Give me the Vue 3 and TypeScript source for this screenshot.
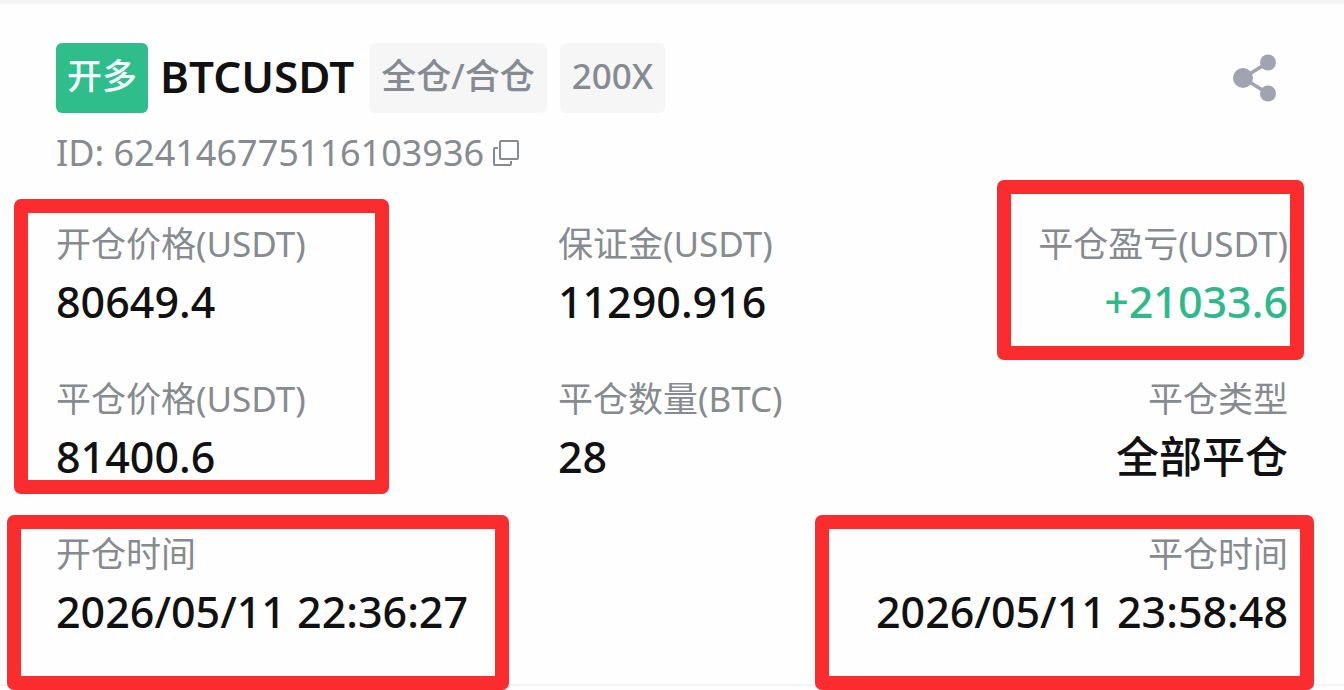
<script setup lang="ts">
interface Field {
  label: string
  value: string
  place: string
  gain?: boolean
}

const orderId = '624146775116103936'

const fields: Field[] = [
  { label: '开仓价格(USDT)', value: '80649.4', place: 'start' },
  { label: '保证金(USDT)', value: '11290.916', place: 'middle' },
  { label: '平仓盈亏(USDT)', value: '+21033.6', place: 'end', gain: true },
  { label: '平仓价格(USDT)', value: '81400.6', place: 'start' },
  { label: '平仓数量(BTC)', value: '28', place: 'middle' },
  { label: '平仓类型', value: '全部平仓', place: 'end' },
  { label: '开仓时间', value: '2026/05/11 22:36:27', place: 'start' },
  { label: '平仓时间', value: '2026/05/11 23:58:48', place: 'end' },
]

const frames: string[] = ['prices', 'profit', 'opened', 'closed']

function copyId(): void {
  void navigator.clipboard?.writeText(orderId)
}
</script>

<template>
  <main class="page">
    <article class="card">
      <header class="head">
        <span class="tag side">开多</span>
        <h1 class="symbol">BTCUSDT</h1>
        <span class="tag">全仓/合仓</span>
        <span class="tag">200X</span>
        <button class="icon share" type="button" aria-label="分享">
          <svg width="46" height="48" viewBox="0 0 46 48" aria-hidden="true">
            <path d="M36 8.500 11 24l25 15.500" fill="none" stroke="#9fa3b2" stroke-width="3.500" />
            <circle cx="11" cy="24" r="10" fill="#9fa3b2" />
            <circle cx="36" cy="8.500" r="8" fill="#9fa3b2" />
            <circle cx="36" cy="39.500" r="8" fill="#9fa3b2" />
          </svg>
        </button>
      </header>

      <div class="order">
        <span>ID: {{ orderId }}</span>
        <button class="icon" type="button" aria-label="复制" @click="copyId">
          <svg width="28" height="28" viewBox="0 0 28 28" fill="none" stroke="#868b90" stroke-width="2" aria-hidden="true">
            <rect x="8" y="2" width="18" height="18" rx="1" />
            <path d="M6 9H3a1 1 0 0 0-1 1v15a1 1 0 0 0 1 1h15a1 1 0 0 0 1-1v-3" />
          </svg>
        </button>
      </div>

      <dl class="fields">
        <div v-for="field in fields" :key="field.label" :class="['field', field.place]">
          <dt>{{ field.label }}</dt>
          <dd :class="{ gain: field.gain }">{{ field.value }}</dd>
        </div>
        <div v-for="frame in frames" :key="frame" :class="['frame', frame]" role="presentation"></div>
      </dl>
    </article>
  </main>
</template>

<style>
body {
  margin: 0;
  background: #fefefe;
}
</style>

<style scoped>
.page {
  padding-bottom: 4px;
}

.card {
  box-sizing: border-box;
  padding: 39px 56px 48px;
  border-top: 4px solid #f4f4f4;
  border-bottom: 2px solid #f4f4f5;
  background: #fefefe;
  color: #111;
  font-family: "Noto Sans", "Noto Sans CJK SC", sans-serif;
}

.head {
  display: flex;
  align-items: flex-start;
}

.tag {
  box-sizing: border-box;
  height: 70px;
  padding: 0 12px;
  border-radius: 6px;
  background: #f6f6f7;
  color: #868b93;
  font-size: 35px;
  font-weight: 500;
  line-height: 66px;
  white-space: nowrap;
}

.tag + .tag {
  margin-left: 13px;
}

.side {
  padding: 0 11px;
  background: #2ebd8b;
  color: #f2fffa;
}

.symbol {
  margin: 0 15px 0 12px;
  font-size: 44px;
  font-weight: 600;
  line-height: 66px;
}

.icon {
  display: flex;
  padding: 0;
  border: 0;
  background: none;
  cursor: pointer;
}

.share {
  align-self: center;
  margin-left: auto;
  margin-right: 10px;
}

.order {
  display: flex;
  align-items: center;
  gap: 8px;
  margin-top: 16px;
  color: #868b90;
  font-size: 36px;
  line-height: 48px;
}

.fields {
  position: relative;
  display: grid;
  grid-template-columns: 11fr 6fr 10fr;
  row-gap: 49px;
  margin: 43px 0 0;
}

.field {
  white-space: nowrap;
}

.start {
  grid-column: 1;
}

.middle {
  grid-column: 2;
}

.end {
  grid-column: 3;
  text-align: right;
}

dt {
  color: #868b90;
  font-size: 35px;
  line-height: 48px;
}

dd {
  margin: 10px 0 0;
  font-size: 43px;
  font-weight: 500;
  line-height: 48px;
}

.gain {
  color: #2fb98a;
}

/* Highlight frames laid over the fields they mark */
.frame {
  position: absolute;
  border: 14px solid #fa2c2e;
  border-radius: 7px;
  pointer-events: none;
}

.prices {
  grid-area: 1 / 1 / 3 / 2;
  inset: -21px 169px -13px -42px;
}

.profit {
  grid-area: 1 / 3 / 2 / 4;
  inset: -40px -16px -34px 165px;
}

.opened {
  grid-area: 3 / 1 / 4 / 2;
  inset: -15px 49px -54px -49px;
}

.closed {
  grid-area: 3 / 3 / 4 / 4;
  inset: -15px -26px -54px -17px;
}
</style>
